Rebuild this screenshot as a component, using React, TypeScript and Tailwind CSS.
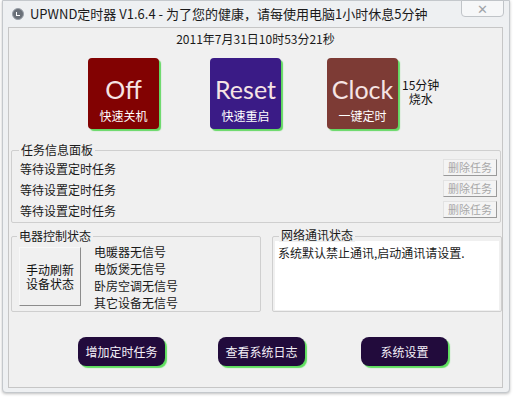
import React from "react";

const cjk = { fontFamily: '"Noto Sans CJK SC", "Noto Sans", sans-serif' };
const comic = { fontFamily: '"Comic Sans MS", Lato, "Noto Sans CJK SC", sans-serif' };

function BigButton({ label, sub, color }: { label: string; sub: string; color: string }) {
    return (
        <div
            className={`w-[71px] h-[71px] rounded-[4px] flex flex-col items-center shadow-[2px_2px_1px_#62d862] ${color}`}
        >
            <span className="mt-[17px] text-[25px] leading-[29px] text-[#f6e4e4]" style={comic}>
                {label}
            </span>
            <span className="mt-[4px] text-[12px] leading-[16px] text-white">{sub}</span>
        </div>
    );
}

function DeleteButton() {
    return (
        <div className="w-[54px] h-[17px] flex items-center justify-center bg-[#f4f4f4] border border-[#e2e2e2] border-r-[#9a9a9a] border-b-[#9a9a9a] text-[11px] text-[#a8a8a8]">
            删除任务
        </div>
    );
}

function DarkButton({ text }: { text: string }) {
    return (
        <div className="w-[87px] h-[29px] rounded-[8px] bg-[#220b3c] flex items-center justify-center text-[12px] text-[#f4f0f8] shadow-[2px_2px_1px_#5ede5e]">
            {text}
        </div>
    );
}

export default function App() {
    return (
        <div className="w-[513px] h-[398px] bg-white overflow-hidden" style={cjk}>
            <div className="ml-[2px] w-[508px] h-[393px] bg-[#eef0f2] border border-[#c4c8cc] rounded-b-[4px] shadow-[0_1px_3px_rgba(0,0,0,0.25)] flex flex-col">
                {/* title bar */}
                <div className="h-[26px] flex items-start">
                    <div className="mt-[7px] ml-[9px] w-[12px] h-[12px] rounded-full bg-[#6a7078] border border-[#9aa0a8] flex items-center justify-center">
                        <div className="w-[4px] h-[4px] border-l border-b border-white" />
                    </div>
                    <span className="mt-[4px] ml-[6px] text-[13px] leading-[17px] text-[#1a1a1a]">
                        UPWND定时器 V1.6.4 - 为了您的健康，请每使用电脑1小时休息5分钟
                    </span>
                    <div className="ml-auto mr-[5px] -mt-px w-[43px] h-[17px] rounded-b-[4px] border border-[#c0c4c8] bg-[#f6f7f8] flex items-center justify-center text-[#a0a4a8] text-[13px] leading-none">
                        ✕
                    </div>
                </div>

                {/* client area */}
                <div className="ml-[5px] w-[495px] h-[361px] bg-[#f0f0f0] border border-[#c6c6c6] flex flex-col">
                    <div className="pt-[3px] text-center text-[12px] leading-[16px] text-[#1a1a1a]">
                        2011年7月31日10时53分21秒
                    </div>

                    <div className="mt-[11px] flex items-center">
                        <div className="ml-[79px]">
                            <BigButton label="Off" sub="快速关机" color="bg-[#820202]" />
                        </div>
                        <div className="ml-[51px]">
                            <BigButton label="Reset" sub="快速重启" color="bg-[#3a1b86]" />
                        </div>
                        <div className="ml-[46px]">
                            <BigButton label="Clock" sub="一键定时" color="bg-[#7d3b35]" />
                        </div>
                        <div className="ml-[4px] -mt-[4px] flex flex-col items-center text-[12px] leading-[14px] text-[#111]">
                            <span>15分钟</span>
                            <span>烧水</span>
                        </div>
                    </div>

                    {/* task panel */}
                    <div className="relative ml-[2px] mt-[21px] w-[490px] h-[73px] border border-[#cfcfcf] rounded-[2px]">
                        <span className="absolute -top-[9px] left-[7px] px-[2px] bg-[#f0f0f0] text-[12px] leading-[16px] text-[#1a1a1a]">
                            任务信息面板
                        </span>
                        <div className="pt-[8px] pl-[8px] pr-[3px] flex flex-col gap-[4px]">
                            {[0, 1, 2].map((i) => (
                                <div key={i} className="flex items-center justify-between h-[17px]">
                                    <span className="text-[12px] text-[#1a1a1a] mt-[3px]">等待设置定时任务</span>
                                    <DeleteButton />
                                </div>
                            ))}
                        </div>
                    </div>

                    <div className="mt-[13px] ml-[2px] flex gap-[11px]">
                        {/* device panel */}
                        <div className="relative w-[250px] h-[76px] border border-[#cfcfcf] rounded-[2px]">
                            <span className="absolute -top-[9px] left-[5px] px-[2px] bg-[#f0f0f0] text-[12px] leading-[16px] text-[#1a1a1a]">
                                电器控制状态
                            </span>
                            <div className="flex pt-[10px] pl-[7px]">
                                <div className="w-[62px] h-[59px] bg-[#f0f0f0] border border-[#f8f8f8] border-r-[#8c8c8c] border-b-[#8c8c8c] flex flex-col items-center justify-center text-[12px] leading-[14px] text-[#111]">
                                    <span>手动刷新</span>
                                    <span>设备状态</span>
                                </div>
                                <div className="ml-[13px] -mt-[4px] flex flex-col text-[12px] leading-[17px] text-[#1a1a1a]">
                                    <span>电暖器无信号</span>
                                    <span>电饭煲无信号</span>
                                    <span>卧房空调无信号</span>
                                    <span>其它设备无信号</span>
                                </div>
                            </div>
                        </div>

                        {/* network panel */}
                        <div className="relative w-[230px] h-[76px] border border-[#cfcfcf] rounded-[2px] px-[2px] pt-[4px] pb-[1px]">
                            <div className="h-full bg-white pl-[3px] pt-[4px] text-[12px] leading-[16px] text-[#1a1a1a]">
                                系统默认禁止通讯,启动通讯请设置.
                            </div>
                            <span className="absolute -top-[9px] left-[6px] px-[2px] bg-[#f0f0f0] text-[12px] leading-[14px] text-[#1a1a1a]">
                                网络通讯状态
                            </span>
                        </div>
                    </div>

                    <div className="mt-[25px] flex">
                        <div className="ml-[69px]">
                            <DarkButton text="增加定时任务" />
                        </div>
                        <div className="ml-[53px]">
                            <DarkButton text="查看系统日志" />
                        </div>
                        <div className="ml-[56px]">
                            <DarkButton text="系统设置" />
                        </div>
                    </div>
                </div>
            </div>
        </div>
    );
}
